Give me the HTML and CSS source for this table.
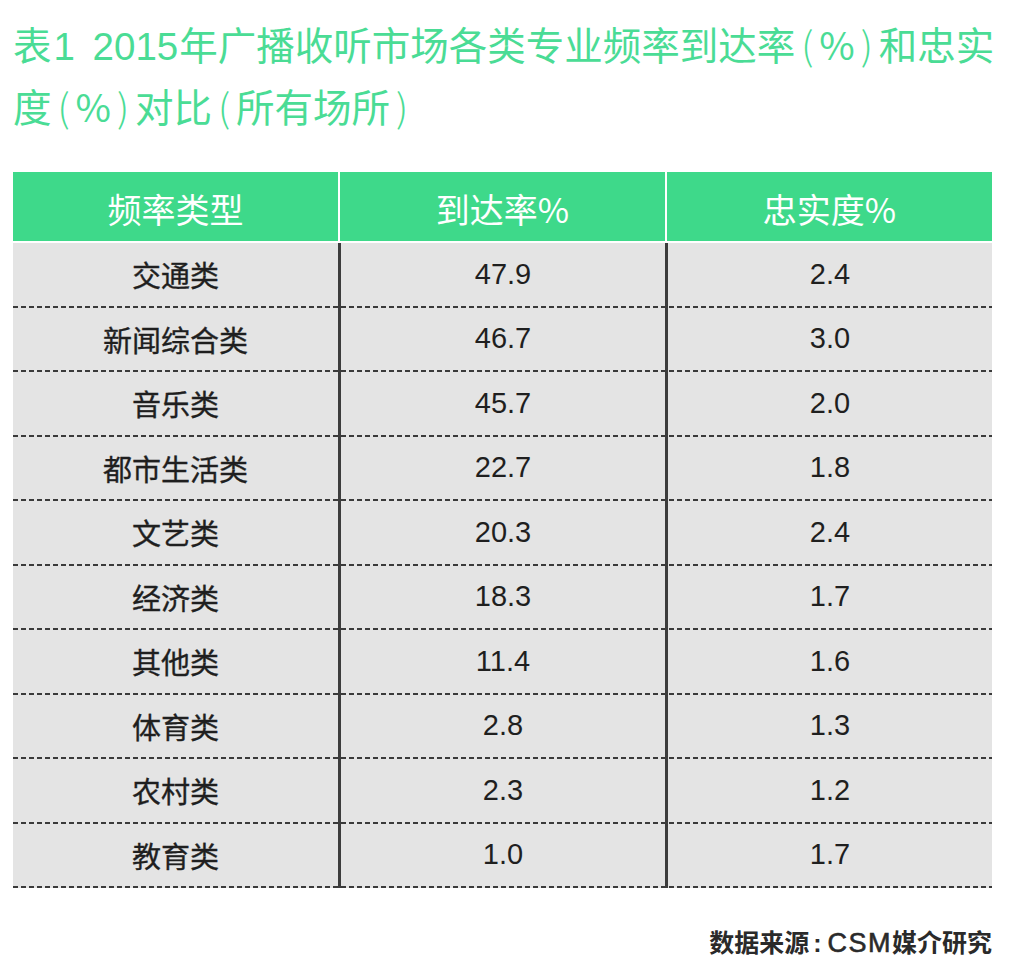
FILE: index.html
```html
<!DOCTYPE html>
<html lang="zh-CN">
<head>
<meta charset="utf-8">
<title>表1</title>
<link rel="stylesheet" href="styles.css">
</head>
<body>
<div class="page">
  <h1 class="title">表<span class="lat">1 2015</span>年广播收听市场各类专业频率到达率<span class="par">(</span>%<span class="par">)</span>和忠实<br>度<span class="par">(</span>%<span class="par">)</span>对比<span class="par">(</span>所有场所<span class="par">)</span></h1>
  <div class="table">
    <div class="head">
      <div class="hcell">频率类型</div>
      <div class="hcell">到达率%</div>
      <div class="hcell">忠实度%</div>
    </div>
    <div class="row"><div class="cell">交通类</div><div class="cell num">47.9</div><div class="cell num">2.4</div></div>
    <div class="row"><div class="cell">新闻综合类</div><div class="cell num">46.7</div><div class="cell num">3.0</div></div>
    <div class="row"><div class="cell">音乐类</div><div class="cell num">45.7</div><div class="cell num">2.0</div></div>
    <div class="row"><div class="cell">都市生活类</div><div class="cell num">22.7</div><div class="cell num">1.8</div></div>
    <div class="row"><div class="cell">文艺类</div><div class="cell num">20.3</div><div class="cell num">2.4</div></div>
    <div class="row"><div class="cell">经济类</div><div class="cell num">18.3</div><div class="cell num">1.7</div></div>
    <div class="row"><div class="cell">其他类</div><div class="cell num">11.4</div><div class="cell num">1.6</div></div>
    <div class="row"><div class="cell">体育类</div><div class="cell num">2.8</div><div class="cell num">1.3</div></div>
    <div class="row"><div class="cell">农村类</div><div class="cell num">2.3</div><div class="cell num">1.2</div></div>
    <div class="row"><div class="cell">教育类</div><div class="cell num">1.0</div><div class="cell num">1.7</div></div>
  </div>
  <div class="source">数据来源<span class="colon">:</span><span class="csm">CSM</span>媒介研究</div>
</div>
</body>
</html>
```

FILE: styles.css
```css
html, body {
  margin: 0;
  padding: 0;
  background: #ffffff;
}

.page {
  width: 979px;
  padding: 12px 0 0 13px;
  font-family: "Liberation Sans", "Noto Sans CJK SC", sans-serif;
}

.title {
  margin: 0;
  font-family: "Noto Sans CJK SC", sans-serif;
  font-weight: 400;
  font-size: 38.5px;
  line-height: 62px;
  color: #4adc95;
  white-space: nowrap;
}

.title .lat {
  font-family: "Liberation Sans", sans-serif;
  margin: 0 1px 0 2px;
  word-spacing: 7px;
  line-height: 1;
}

.title .par {
  display: inline-block;
  width: 24px;
  text-align: center;
  font-weight: 300;
  line-height: 1;
}

.table {
  margin-top: 36px;
  width: 979px;
}

.head {
  display: grid;
  grid-template-columns: 325px 325px 1fr;
  column-gap: 2px;
  height: 69px;
  margin-bottom: 2px;
}

.hcell {
  background: #3ed98a;
  color: #ffffff;
  font-family: "Noto Sans CJK SC", sans-serif;
  font-size: 34px;
  display: flex;
  align-items: center;
  justify-content: center;
  padding-top: 4px;
  box-sizing: border-box;
}

.row {
  display: grid;
  grid-template-columns: 325px 327px 1fr;
  height: 64.5px;
  background-color: #e4e4e4;
  background-image: linear-gradient(to right, #3a3a3a 0 5px, transparent 5px 8px);
  background-size: 8px 2px;
  background-repeat: repeat-x;
  background-position: 0 100%;
}

.cell {
  display: flex;
  align-items: center;
  justify-content: center;
  font-size: 29px;
  color: #1f1f1f;
  padding-bottom: 2px;
  box-sizing: border-box;
  -webkit-text-stroke: 0.35px #1f1f1f;
}

.cell + .cell {
  border-left: 3px solid #3c3c3c;
}

.cell.num {
  font-family: "Liberation Sans", sans-serif;
  -webkit-text-stroke: 0;
}

.source {
  margin-top: 35px;
  text-align: right;
  font-size: 25px;
  font-weight: 700;
  color: #2a2a2a;
  font-family: "Noto Sans CJK SC", sans-serif;
}

.source .colon {
  font-family: "Liberation Sans", sans-serif;
  margin: 0 6px 0 4px;
}

.source .csm {
  font-family: "Liberation Sans", sans-serif;
  font-size: 27px;
  font-weight: 400;
  letter-spacing: 1.5px;
  -webkit-text-stroke: 0.6px #2a2a2a;
}
```
